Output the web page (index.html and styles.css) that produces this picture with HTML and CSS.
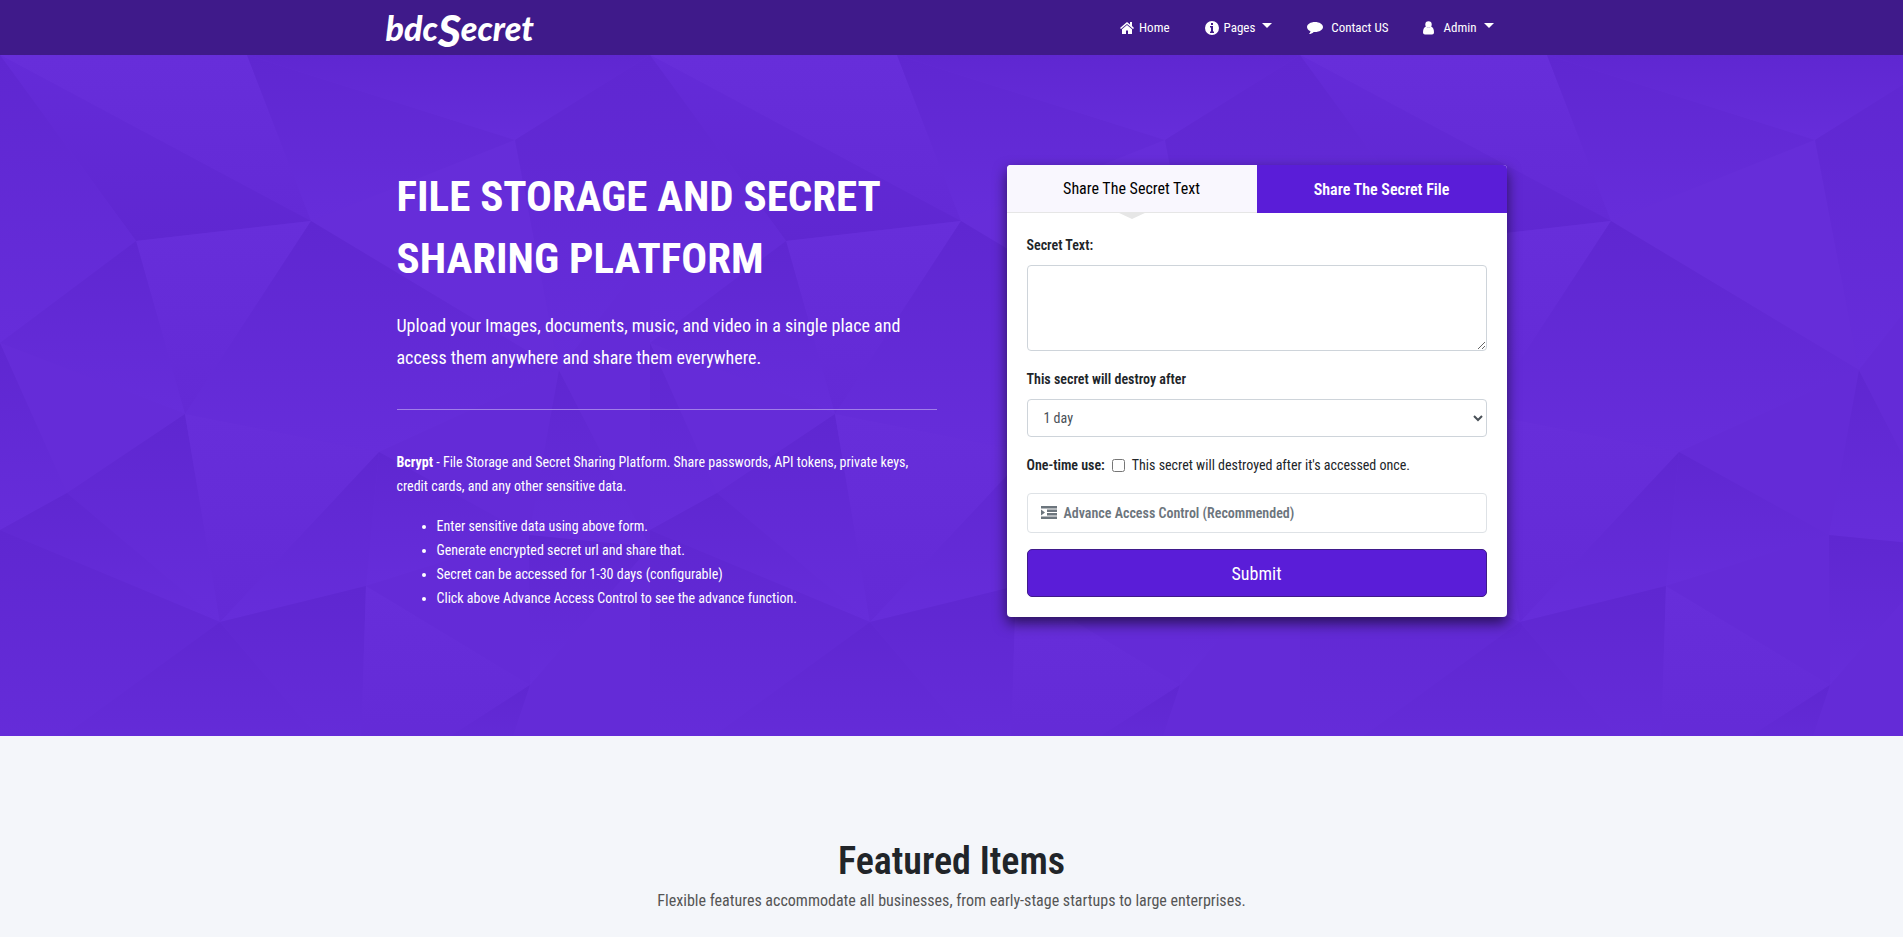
FILE: index.html
```
<!DOCTYPE html>
<html lang="en">
<head>
<meta charset="UTF-8">
<meta name="viewport" content="width=device-width, initial-scale=1.0">
<title>bdcSecret - File Storage and Secret Sharing Platform</title>
<link rel="stylesheet" href="styles.css">
</head>
<body>
    <!-- Navbar -->
    <header class="navbar">
        <div class="container navbar-inner">
            <a class="brand" href="#">bdc<span class="brand-s">S</span>ecret</a>
            <nav class="nav">
                <a class="nav-link" href="#">
                    <svg class="icon" width="14" height="14" viewBox="0 0 14 14" aria-hidden="true"><path d="M7 1 0 7l1 1 6-5 6 5 1-1-2-2V1h-2v2.500z"/><path d="M7 4 2 8.200V13h4V9.500h2V13h4V8.200z"/></svg>
                    <span>Home</span>
                </a>
                <a class="nav-link" href="#">
                    <svg class="icon" width="14" height="14" viewBox="0 0 14 14" aria-hidden="true"><path fill-rule="evenodd" d="M7 0a7 7 0 1 1 0 14A7 7 0 0 1 7 0zM6 2v2h2V2zM5 5v1.500h1v4H5V12h4v-1.500H8V5z"/></svg>
                    <span>Pages</span>
                    <span class="caret"></span>
                </a>
                <a class="nav-link" href="#">
                    <svg class="icon icon-wide" width="16" height="14" viewBox="0 0 16 14" aria-hidden="true"><path d="M8 1c4.400 0 8 2.200 8 5s-3.600 5-8 5l-1.300-.1C5.300 12.200 3.600 13 2 13c.8-.8 1.300-1.600 1.500-2.700C1.400 9.400 0 7.800 0 6c0-2.800 3.600-5 8-5z"/></svg>
                    <span>Contact US</span>
                </a>
                <a class="nav-link" href="#">
                    <svg class="icon icon-wide" width="12" height="14" viewBox="0 0 12 14" aria-hidden="true"><path d="M3 5.500Q0 6.500 0 11.500 0 13.500 2 13.500h7q2 0 2-2 0-5-3-6Q5.500 8 3 5.500z"/><circle cx="5.500" cy="3.500" r="3.200"/></svg>
                    <span>Admin</span>
                    <span class="caret"></span>
                </a>
            </nav>
        </div>
    </header>

    <!-- Hero -->
    <section class="hero">
        <svg class="hero-bg" width="100%" height="100%" aria-hidden="true">
            <defs>
                <linearGradient id="down" x1="0" y1="0" x2="0" y2="1">
                    <stop offset="0" stop-color="#5f27d1"/>
                    <stop offset="1" stop-color="#662dda"/>
                </linearGradient>
                <linearGradient id="up" x1="0" y1="0" x2="0" y2="1">
                    <stop offset="0" stop-color="#642bd8"/>
                    <stop offset="1" stop-color="#5f27d1"/>
                </linearGradient>
                <linearGradient id="light" x1="0" y1="0" x2="0" y2="1">
                    <stop offset="0" stop-color="#672eda"/>
                    <stop offset="1" stop-color="#632ad6"/>
                </linearGradient>
                <pattern id="facets" width="650" height="720" patternUnits="userSpaceOnUse">
                    <rect width="650" height="720" fill="#642bd7"/>
                    <polygon fill="url(#light)" points="0,0 247,0 311,166"/>
                    <polygon fill="url(#down)" points="247,0 515,85 311,166"/>
                    <polygon fill="url(#down)" points="247,0 650,0 515,85"/>
                    <polygon fill="#662dd9" points="311,166 515,85 559,315"/>
                    <polygon fill="url(#down)" points="515,85 650,0 650,199 559,315"/>
                    <polygon fill="url(#up)" points="0,0 311,166 136,186"/>
                    <polygon fill="url(#down)" points="0,0 136,186 0,288"/>
                    <polygon fill="url(#light)" points="136,186 311,166 185,359"/>
                    <polygon fill="url(#down)" points="311,166 559,315 379,397 185,359"/>
                    <polygon fill="url(#down)" points="136,186 185,359 0,288"/>
                    <polygon fill="#652cd8" points="0,288 185,359 67,438"/>
                    <polygon fill="url(#down)" points="0,288 67,438 0,475"/>
                    <polygon fill="url(#down)" points="67,438 185,359 220,567"/>
                    <polygon fill="url(#down)" points="0,475 67,438 220,567"/>
                    <polygon fill="url(#light)" points="185,359 379,397 220,567"/>
                    <polygon fill="url(#down)" points="379,397 366,531 220,567"/>
                    <polygon fill="#642bd7" points="559,315 529,480 379,397"/>
                    <polygon fill="url(#down)" points="379,397 529,480 366,531"/>
                    <polygon fill="url(#down)" points="559,315 650,492 529,480"/>
                    <polygon fill="#642bd7" points="650,199 650,492 559,315"/>
                    <polygon fill="#642bd7" points="366,531 529,480 530,630"/>
                    <polygon fill="url(#down)" points="529,480 650,492 530,630"/>
                    <polygon fill="url(#down)" points="0,475 220,567 63,682 0,720"/>
                    <polygon fill="url(#down)" points="220,567 350,720 10,720"/>
                    <polygon fill="url(#down)" points="220,567 366,531 360,720 350,720"/>
                    <polygon fill="url(#light)" points="366,531 530,630 390,720 360,720"/>
                    <polygon fill="url(#down)" points="530,630 500,720 390,720"/>
                </pattern>
            </defs>
            <rect width="100%" height="100%" fill="url(#facets)"/>
        </svg>
        <div class="container hero-inner">
            <div class="hero-text">
                <h1>FILE STORAGE AND SECRET SHARING PLATFORM</h1>
                <p class="lead">Upload your Images, documents, music, and video in a single place and access them anywhere and share them everywhere.</p>
                <hr>
                <p class="about"><strong>Bcrypt</strong> - File Storage and Secret Sharing Platform. Share passwords, API tokens, private keys, credit cards, and any other sensitive data.</p>
                <ul>
                    <li>Enter sensitive data using above form.</li>
                    <li>Generate encrypted secret url and share that.</li>
                    <li>Secret can be accessed for 1-30 days (configurable)</li>
                    <li>Click above Advance Access Control to see the advance function.</li>
                </ul>
            </div>

            <div class="card">
                <div class="tabs">
                    <button type="button" class="tab active">Share The Secret Text</button>
                    <button type="button" class="tab">Share The Secret File</button>
                </div>
                <form class="card-body">
                    <div class="form-group">
                        <label for="secret">Secret Text:</label>
                        <textarea class="form-control" id="secret"></textarea>
                    </div>
                    <div class="form-group">
                        <label for="expire">This secret will destroy after</label>
                        <select class="form-control" id="expire">
                            <option>1 day</option>
                            <option>7 days</option>
                            <option>30 days</option>
                        </select>
                    </div>
                    <div class="one-time">
                        <label for="once">One-time use:</label>
                        <input type="checkbox" id="once">
                        <span>This secret will destroyed after it's accessed once.</span>
                    </div>
                    <button type="button" class="advance">
                        <svg class="icon-indent" width="16" height="14" viewBox="0 0 16 14" aria-hidden="true"><path d="M0 0h16v2.500H0zM6 3.500h10V6H6zM6 7h10v2.500H6zM0 10.500h16V13H0zM0 3.500l4 3-4 3z"/></svg>
                        <span>Advance Access Control (Recommended)</span>
                    </button>
                    <button type="submit" class="submit">Submit</button>
                </form>
            </div>
        </div>
    </section>

    <!-- Featured -->
    <section class="featured">
        <h2>Featured Items</h2>
        <p>Flexible features accommodate all businesses, from early-stage startups to large enterprises.</p>
    </section>
</body>
</html>
```
FILE: styles.css
```
* {
    box-sizing: border-box;
}
body {
    margin: 0;
    font-family: "Saira Extra Condensed", "Roboto Condensed", "Liberation Sans Narrow", Roboto, sans-serif;
    font-size: 14px;
    line-height: 24px;
    color: #212529;
    background-color: #f4f6fa;
}
.container {
    max-width: 1140px;
    margin: 0 auto;
}

/* navbar */
.navbar {
    background-color: #3f1a8a;
}
.navbar-inner {
    display: flex;
    align-items: center;
    justify-content: space-between;
    height: 55px;
    padding: 0 28px 0 4px;
}
.brand {
    font-family: Lato, sans-serif;
    font-size: 34px;
    font-weight: 900;
    font-style: italic;
    line-height: 40px;
    color: #ffffff;
    text-decoration: none;
}
.brand-s {
    font-size: 44px;
    line-height: 32px;
    vertical-align: -6px;
}
.nav {
    display: flex;
    gap: 35px;
}
.nav-link {
    display: flex;
    align-items: center;
    gap: 5px;
    color: #ffffff;
    font-size: 13px;
    text-decoration: none;
}
.icon {
    fill: #ffffff;
}
.icon-wide {
    margin-right: 3px;
}
.caret {
    margin: 0 0 4px 2px;
    border-top: 5px solid #ffffff;
    border-left: 5px solid transparent;
    border-right: 5px solid transparent;
}

/* hero */
.hero {
    position: relative;
    background-color: #642bd7;
    color: #ffffff;
}
.hero-bg {
    position: absolute;
    top: 0;
    left: 0;
}
.hero-inner {
    position: relative;
    display: flex;
    align-items: flex-start;
    gap: 70px;
    padding: 110px 15px;
}
.hero-text {
    flex: 1;
}
.hero-text h1 {
    margin: 0 0 21px;
    font-size: 43px;
    font-weight: 700;
    line-height: 62px;
}
.lead {
    margin: 0 0 35px;
    font-size: 18px;
    line-height: 32px;
}
.hero-text hr {
    margin: 0 0 40px;
    border: 0;
    border-top: 1px solid #a07ee8;
}
.about {
    margin: 0 0 16px;
}
.hero-text ul {
    margin: 0 0 16px;
    padding-left: 40px;
}

/* card */
.card {
    width: 500px;
    border-radius: 4px;
    background-color: #ffffff;
    box-shadow: 0 6px 14px rgba(0, 0, 0, 0.6);
    color: #212529;
}
.tabs {
    display: flex;
}
.tab {
    position: relative;
    flex: 1;
    height: 48px;
    border: 0;
    border-radius: 0 4px 0 0;
    background-color: #5a1dd8;
    color: #ffffff;
    font-family: inherit;
    font-size: 16px;
    font-weight: 600;
    cursor: pointer;
}
.tab.active {
    border-bottom: 1px solid #e6e6e6;
    border-radius: 4px 0 0 0;
    background-color: #f9f7fe;
    color: #000000;
    font-weight: 400;
}
.tab.active::after {
    content: "";
    position: absolute;
    top: 100%;
    left: 50%;
    margin-left: -15px;
    border-top: 7px solid #e6e6e6;
    border-left: 15px solid transparent;
    border-right: 15px solid transparent;
}
.card-body {
    display: flex;
    flex-direction: column;
    gap: 16px;
    padding: 20px;
}
label {
    font-weight: 600;
}
.form-group {
    display: flex;
    flex-direction: column;
    gap: 8px;
}
.form-control {
    width: 100%;
    height: 38px;
    padding: 6px 12px;
    border: 1px solid #ced4da;
    border-radius: 4px;
    background-color: #ffffff;
    color: #495057;
    font-family: inherit;
    font-size: 14px;
}
textarea.form-control {
    height: 86px;
    resize: vertical;
}
.one-time {
    display: flex;
    align-items: center;
    gap: 7px;
}
.one-time input {
    margin: 0;
}
.advance {
    display: flex;
    align-items: center;
    gap: 7px;
    height: 40px;
    padding: 0 13px;
    border: 1px solid #dee2e6;
    border-radius: 4px;
    background-color: #ffffff;
    color: #6c757d;
    font-family: inherit;
    font-size: 14px;
    font-weight: 600;
}
.icon-indent {
    fill: #6c757d;
}
.submit {
    height: 48px;
    border: 1px solid #3f1a8a;
    border-radius: 5px;
    background-color: #5a1dd8;
    color: #ffffff;
    font-family: inherit;
    font-size: 18px;
}

/* featured */
.featured {
    padding: 100px 15px 0;
    text-align: center;
}
.featured h2 {
    margin: 0 0 3px;
    font-size: 38px;
    font-weight: 600;
    line-height: 50px;
}
.featured p {
    margin: 0;
    font-size: 16px;
    color: #555555;
}
```
